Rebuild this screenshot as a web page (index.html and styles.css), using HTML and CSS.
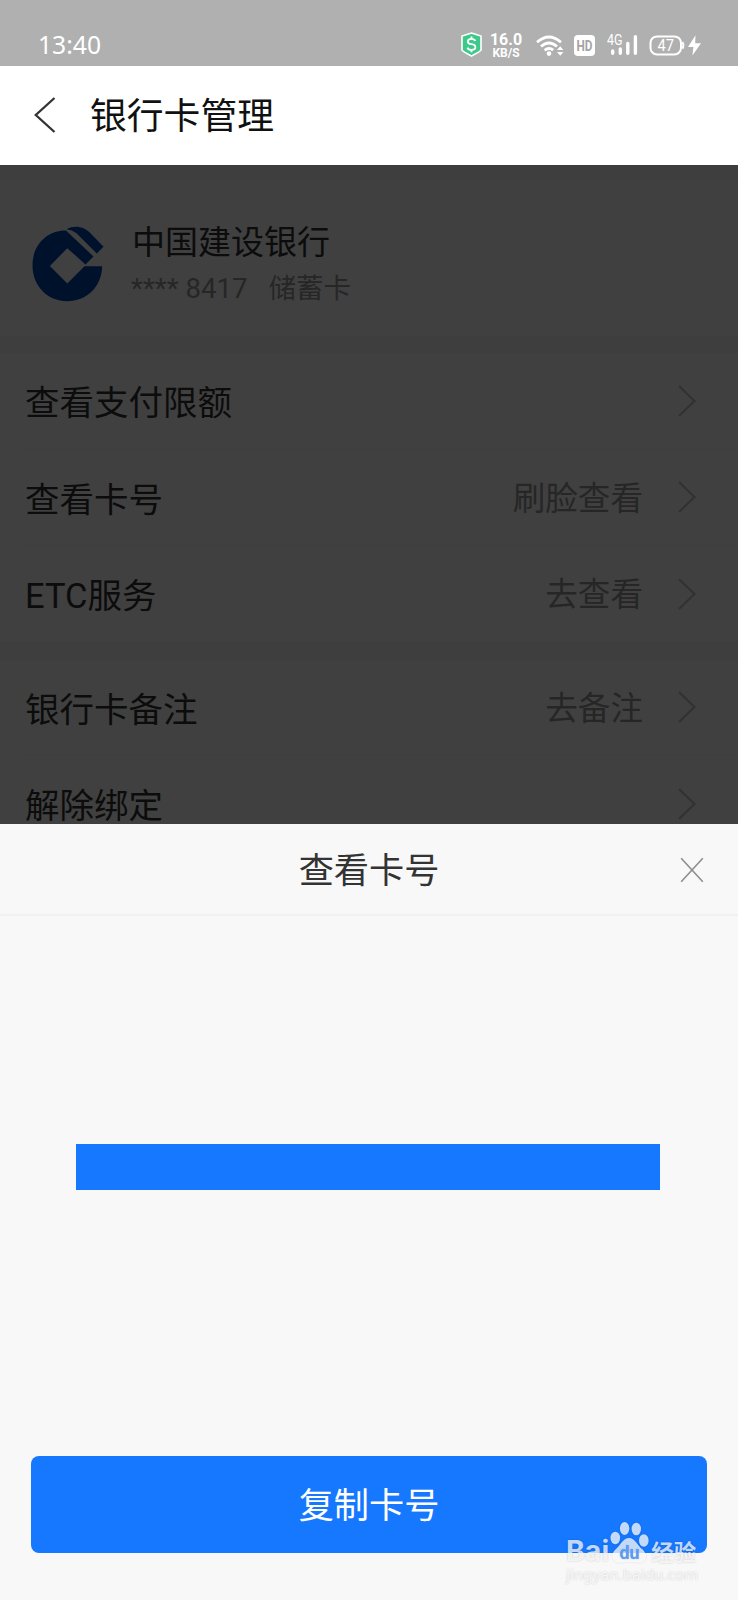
FILE: index.html
```html
<!DOCTYPE html>
<html lang="zh-CN">
<head>
    <meta charset="UTF-8">
    <meta name="viewport" content="width=device-width, initial-scale=1.0">
    <title>银行卡管理</title>
    <link rel="stylesheet" href="styles.css">
</head>
<body>
    <div class="statusbar">
        <span class="time">13:40</span>
        <div class="status-icons">
            <svg class="shield" width="21" height="25" viewBox="0 0 21 25">
                <path d="M10.5 1 L20 4 V18 Q19.5 19.5 10.5 24 Q1.5 19.5 1 18 V4 Z" fill="#3dc98a" stroke="#fff" stroke-width="1.6"/>
                <path d="M14.3 9 Q13.5 6.8 10.5 6.8 Q6.8 6.8 6.8 9.4 Q6.8 11.6 10.5 12.2 Q14.4 12.8 14.4 15.3 Q14.4 17.9 10.5 17.9 Q7.2 17.9 6.4 15.6 M10.5 4.6 V7 M10.5 17.8 V20.2" fill="none" stroke="#fff" stroke-width="1.8"/>
            </svg>
            <div class="speed"><b>16.0</b><small>KB/S</small></div>
            <svg class="wifi" width="28" height="22" viewBox="0 0 28 22">
                <g fill="none" stroke="#fff" stroke-width="2.8">
                    <path d="M1 7.2 Q13 -3.2 25 7.2"/>
                    <path d="M5 11.5 Q13 4.6 21 11.5"/>
                    <path d="M8.6 15.4 Q13 11.8 17.2 15.2"/>
                </g>
                <circle cx="13" cy="18.6" r="2.3" fill="#fff"/>
                <path d="M21 15 L24.2 11.2 L27.4 15 Z M21 17 L24.2 20.8 L27.4 17 Z" fill="#fff"/>
            </svg>
            <svg class="hd" width="21" height="21" viewBox="0 0 21 21">
                <rect width="21" height="21" rx="4" fill="#fff"/>
                <text x="2.5" y="16" textLength="16" lengthAdjust="spacingAndGlyphs">HD</text>
            </svg>
            <svg class="signal" width="31" height="22" viewBox="0 0 31 22">
                <text x="0" y="10.3" class="net" textLength="15.5" lengthAdjust="spacingAndGlyphs">4G</text>
                <path d="M5.7 16 V18.3 M13.3 14 V18.3 M20.8 8.4 V18.3 M28.4 1.7 V18.3" stroke="#fff" stroke-width="3.4" stroke-linecap="round"/>
            </svg>
            <svg class="battery" width="52" height="22" viewBox="0 0 52 22">
                <rect x="1.5" y="1.4" width="30.5" height="18" rx="6.5" fill="none" stroke="#fff" stroke-width="2"/>
                <path d="M33.5 7 Q35.5 10.4 33.5 13.8" fill="none" stroke="#fff" stroke-width="1.8"/>
                <text x="8.5" y="16.1" class="level" textLength="16.5" lengthAdjust="spacingAndGlyphs">47</text>
                <path d="M46.5 0.2 L39 12 H44.4 L43.4 20.5 L52 8.3 H46.2 Z" fill="#fff"/>
            </svg>
        </div>
    </div>

    <header class="navbar">
        <svg class="back" width="22" height="36" viewBox="0 0 22 36">
            <path d="M20.5 1 L1.8 18 L20.5 35" fill="none" stroke="#333" stroke-width="2.3"/>
        </svg>
        <h1>银行卡管理</h1>
    </header>

    <main class="page">
        <section class="bank">
            <svg class="logo" width="72" height="76" viewBox="0 0 72 76">
                <path d="M55 40.3 L70.2 40.3 C69.5 62 54 75.2 35.3 75.2 C15 75.2 0.5 59.5 0.5 39.5 C0.5 18.5 15.5 4.3 34 4.6 L61.5 30.5 L53.5 38.5 L35.3 22.2 L17.9 39.9 L35.3 57.5 L52.5 40.3 Z" fill="#004aac"/>
                <path d="M34.5 3.2 C43 -1.2 52.5 0.4 59.5 8.2 L71.5 20.7 L64.8 27.6 L44.5 7.2 Q40 3.8 34.5 3.2 Z" fill="#004aac"/>
            </svg>
            <div class="bank-info">
                <div class="bank-name">中国建设银行</div>
                <div class="bank-card"><span>**** 8417</span><span>储蓄卡</span></div>
            </div>
        </section>

        <section class="group">
            <div class="row">
                <span class="label">查看支付限额</span>
                <svg class="arrow" width="18" height="32" viewBox="0 0 18 32"><path d="M1 1 L16.5 16 L1 31"/></svg>
            </div>
            <div class="row">
                <span class="label">查看卡号</span>
                <span class="value">刷脸查看</span>
                <svg class="arrow" width="18" height="32" viewBox="0 0 18 32"><path d="M1 1 L16.5 16 L1 31"/></svg>
            </div>
            <div class="row">
                <span class="label">ETC服务</span>
                <span class="value">去查看</span>
                <svg class="arrow" width="18" height="32" viewBox="0 0 18 32"><path d="M1 1 L16.5 16 L1 31"/></svg>
            </div>
        </section>

        <section class="group remark">
            <div class="row">
                <span class="label">银行卡备注</span>
                <span class="value">去备注</span>
                <svg class="arrow" width="18" height="32" viewBox="0 0 18 32"><path d="M1 1 L16.5 16 L1 31"/></svg>
            </div>
            <div class="row">
                <span class="label">解除绑定</span>
                <svg class="arrow" width="18" height="32" viewBox="0 0 18 32"><path d="M1 1 L16.5 16 L1 31"/></svg>
            </div>
        </section>
        <div class="mask"></div>
    </main>

    <div class="sheet">
        <div class="sheet-header">
            <h2>查看卡号</h2>
            <svg class="close" width="24" height="26" viewBox="0 0 24 26">
                <path d="M1.2 1.2 L22.8 24.8 M22.8 1.2 L1.2 24.8" stroke="#8e8e8e" stroke-width="1.6"/>
            </svg>
        </div>
        <div class="sheet-body">
            <div class="card-number"></div>
            <button class="copy">复制卡号</button>
        </div>
    </div>

    <div class="watermark">
        <div class="wm-top">
            <span class="wm-bai">Bai</span>
            <svg class="paw" width="40" height="44" viewBox="0 0 40 44">
                <ellipse cx="6.3" cy="17" rx="4.8" ry="6.2"/>
                <ellipse cx="15.6" cy="7.5" rx="4.7" ry="6.5"/>
                <ellipse cx="27.3" cy="8" rx="4.7" ry="6.3"/>
                <ellipse cx="34.8" cy="19.5" rx="4.8" ry="6.2"/>
                <path d="M20 17 C26 17 28 24 33 28 C40 34 37 42 29 41.5 C23 40.5 18 40.5 12 41.5 C4 42 0.5 35 6 29 C11 25 14 17 20 17 Z"/>
                <text x="20.5" y="37.5">du</text>
            </svg>
            <span class="wm-cn">经验</span>
        </div>
        <div class="wm-url">jingyan.baidu.com</div>
    </div>
</body>
</html>
```

FILE: styles.css
```css
* {
    box-sizing: border-box;
}

body {
    margin: 0;
    width: 738px;
    height: 1600px;
    position: relative;
    overflow: hidden;
    background: #f5f5f5;
    font-family: Roboto, "Noto Sans CJK SC", sans-serif;
    color: #333;
}

h1, h2 {
    margin: 0;
    font-weight: 400;
}

svg {
    display: block;
    flex: none;
    overflow: visible;
}

/* status bar */
.statusbar {
    display: flex;
    justify-content: space-between;
    height: 66px;
    padding: 31px 37px 0 38px;
    background: #b0b0b0;
    color: #fff;
}

.time {
    font-family: "Noto Sans", sans-serif;
    font-size: 24.7px;
    line-height: 27px;
}

.status-icons {
    display: flex;
    align-items: flex-start;
    height: 28px;
}

.shield {
    margin: 1px 7px 0 0;
}

.speed {
    width: 34px;
    padding-top: 2px;
    text-align: center;
    line-height: 14px;
}

.speed b, .speed small {
    display: block;
    font-size: 16px;
    font-weight: 700;
}

.speed small {
    font-size: 12px;
    line-height: 12px;
}

.wifi {
    margin: 4px 0 0 13px;
}

.hd {
    margin: 4px 0 0 10px;
}

.hd text {
    fill: #a4a4a4;
    font-size: 15px;
    font-weight: 700;
}

.signal {
    margin: 4px 0 0 12px;
}

.battery {
    margin: 4px 0 0 11px;
}

.net {
    fill: #fff;
    font-size: 14px;
}

.level {
    fill: #fff;
    font-size: 16px;
}

/* title bar */
.navbar {
    display: flex;
    align-items: center;
    height: 99px;
    padding-left: 34px;
    background: #fff;
}

.back {
    margin-bottom: 2px;
}

.navbar h1 {
    margin: 2px 0 0 34px;
    font-size: 36.8px;
    line-height: 50px;
    color: #111;
}

/* page under the mask */
.page {
    position: relative;
    height: 659px;
    padding-top: 15px;
    overflow: hidden;
}

.mask {
    position: absolute;
    inset: 0;
    background: rgba(0, 0, 0, 0.75);
}

.bank {
    display: flex;
    height: 156px;
    padding: 46px 32px 0;
    background: #fff;
}

.bank-info {
    margin-left: 28px;
}

.bank-name {
    font-size: 33px;
    line-height: 34px;
}

.bank-card {
    display: flex;
    gap: 21px;
    margin: 12px 0 0 -1px;
    font-size: 27.6px;
    line-height: 34px;
    color: #999;
}

.group {
    margin-top: 17px;
    background: #fff;
}

.row {
    display: flex;
    align-items: center;
    height: 96.5px;
    margin-left: 25px;
    padding-right: 42px;
    border-bottom: 1px solid #f5f5f5;
}

.row:last-child {
    height: 95px;
    border-bottom: none;
}

.remark {
    margin-top: 20px;
}

.remark .row {
    height: 93.5px;
}

.remark .row:last-child {
    height: 98px;
}

.label {
    flex: 1;
    padding-top: 5px;
    font-size: 34.5px;
    line-height: 1;
}

.value {
    margin-right: 35px;
    padding-top: 4px;
    font-size: 32.6px;
    line-height: 1;
    color: #999;
}

.arrow path {
    fill: none;
    stroke: #c4c4c4;
    stroke-width: 2.2;
}

/* bottom sheet */
.sheet {
    height: 776px;
    background: #f8f8f8;
}

.sheet-header {
    display: flex;
    align-items: center;
    height: 92px;
    padding: 0 34px 0 58px;
    border-bottom: 2px solid #f1f1f1;
}

.sheet-header h2 {
    flex: 1;
    padding-bottom: 3px;
    font-size: 35.2px;
    text-align: center;
}

.close {
    margin-top: 2px;
}

.sheet-body {
    display: flex;
    flex-direction: column;
    padding: 228px 31px 0;
}

.card-number {
    width: 584px;
    height: 46px;
    margin-left: 45px;
    background: #1677ff;
}

.copy {
    height: 97px;
    margin-top: 266px;
    padding: 0 0 4px;
    border: none;
    border-radius: 8px;
    background: #1677ff;
    color: #fff;
    font-family: inherit;
    font-size: 35.2px;
}

/* watermark */
.watermark {
    position: absolute;
    left: 566px;
    top: 1521px;
    color: rgba(255, 255, 255, 0.75);
    text-shadow: 0 0 2px rgba(0, 0, 0, 0.2);
}

.wm-top {
    display: flex;
    align-items: flex-end;
    height: 44px;
}

.wm-bai {
    font-family: Inter, sans-serif;
    font-size: 28.5px;
    font-weight: 700;
    line-height: 28px;
}

.paw {
    fill: rgba(255, 255, 255, 0.75);
    filter: drop-shadow(0 0 1px rgba(0, 0, 0, 0.15));
}

.paw text {
    fill: #5a9bf5;
    font-size: 18px;
    font-weight: 700;
    text-anchor: middle;
}

.wm-cn {
    margin-left: 2px;
    font-size: 22.5px;
    font-weight: 700;
    line-height: 24px;
}

.wm-url {
    font-family: "Noto Sans", sans-serif;
    font-size: 15.3px;
    line-height: 18px;
}
```
